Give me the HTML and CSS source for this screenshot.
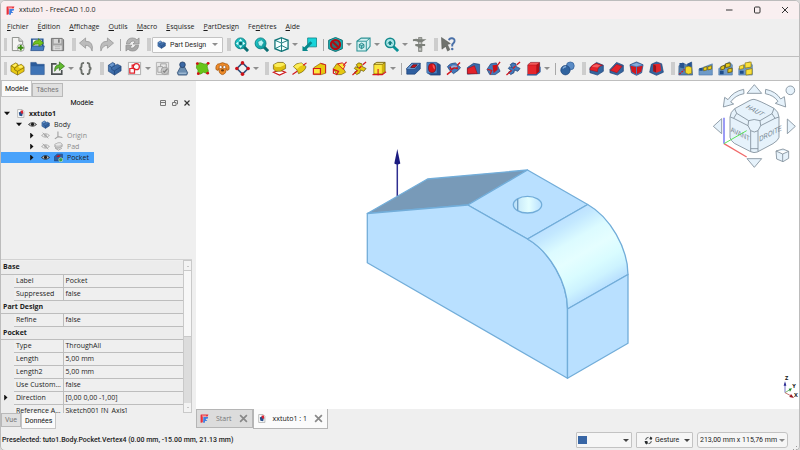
FILE: index.html
```html
<!DOCTYPE html>
<html lang="fr">
<head>
<meta charset="utf-8">
<title>xxtuto1 - FreeCAD 1.0.0</title>
<link rel="stylesheet" href="styles.css">
</head>
<body>
<svg class="sprite" aria-hidden="true">
  <defs>
    <linearGradient id="blueBox" x1="0" y1="0" x2="1" y2="1"><stop offset="0" stop-color="#5b8dc8"/><stop offset="1" stop-color="#24508c"/></linearGradient>
    <linearGradient id="tealLens" x1="0" y1="0" x2="1" y2="1"><stop offset="0" stop-color="#1fd3d6"/><stop offset="1" stop-color="#0b9194"/></linearGradient>
  </defs>
  <symbol id="logo" viewBox="0 0 16 16"><path d="M1 1.500Q1 1 2 1H15L13.500 4.500H5V14.500L2 15.500Q1 15.500 1 14.500Z" fill="#e8303c"/><path d="M3.500 3.500H11" stroke="#fff" stroke-width="1"/><path d="M6 5.500H14.500L13.500 8.500H10.500V10.500H13L11.500 12.500H9L8.500 15.500H5.500Z" fill="#3f7fe0"/></symbol>
  <symbol id="doc" viewBox="0 0 16 16"><path d="M3 1H11L14 4V15H3Z" fill="#fff" stroke="#8d8f8c"/><path d="M5 6L9 4L12 8L11 13L6 12Z" fill="#264f8c"/><path d="M8 3L12 2L13 8L9 8Z" fill="#d92030"/></symbol>
  <symbol id="new" viewBox="0 0 16 16"><path d="M2.500.500H9.500L13.500 4.500V14.500H2.500Z" fill="#f4f4f2" stroke="#8a8c88"/><path d="M9.500.500V4.500H13.500" fill="#d8d8d6" stroke="#8a8c88"/><circle cx="11.500" cy="11.500" r="3.800" fill="#f6f6f4" stroke="#7d807a" stroke-width=".7"/><path d="M11.500 8.500V14.500M8.500 11.500H14.500" stroke="#3d8a12" stroke-width="2"/></symbol>
  <symbol id="open" viewBox="0 0 16 16"><path d="M1 1.500H14.500V13H1Z" fill="#2b5a98"/><path d="M3 3H12.500V10H3Z" fill="#eeeeec"/><path d="M.800 14.500L2 9.500H15.200L14.200 14.500Z" fill="#4a80c2" stroke="#204a87" stroke-width=".8"/><path d="M3 9Q4 3 9 4V1.800L14.500 6.500L9.500 10V7.500Q5 7 3 9Z" fill="#73c51d" stroke="#3e7d06" stroke-width=".7"/></symbol>
  <symbol id="save" viewBox="0 0 16 16"><path d="M1.500 1.500H13L14.500 3V14.500H1.500Z" fill="#a3a3a3" stroke="#707070"/><path d="M4 2H12V7H4Z" fill="#d6d6d6"/><path d="M9.500 2.500V6" stroke="#666" stroke-width="1.500"/><path d="M3.500 9H12.500V14H3.500Z" fill="#e4e4e4"/><path d="M5 10.500H11M5 12.500H11" stroke="#aaa"/></symbol>
  <symbol id="undo" viewBox="0 0 16 16"><path d="M.500 6.500L7 1V4.500Q16 4.500 14 15Q12 9 7 8.800V12Z" fill="#bcbcbc" stroke="#8d8d8d" stroke-width=".7"/></symbol>
  <symbol id="redo" viewBox="0 0 16 16"><path d="M15.500 6.500L9 1V4.500Q0 4.500 2 15Q4 9 9 8.800V12Z" fill="#bcbcbc" stroke="#8d8d8d" stroke-width=".7"/></symbol>
  <symbol id="refresh" viewBox="0 0 16 16"><path d="M1.500 7.500Q2 1 8 1Q11 1 12.700 3L15 1V7.500H8.500L10.800 5.300Q7 2.500 4.800 7.500Z" fill="#b5b5b5" stroke="#868686" stroke-width=".7"/><path d="M14.500 8.800Q14 15 8 15Q5 15 3.300 13L1 15V8.800H7.500L5.200 11Q9 13.500 11.200 8.800Z" fill="#a8a8a8" stroke="#868686" stroke-width=".7"/></symbol>
  <symbol id="fit" viewBox="0 0 16 16"><path d="M10 10L15 15" stroke="#0a6e72" stroke-width="3.200"/><circle cx="7" cy="6.800" r="5.800" fill="url(#tealLens)" stroke="#0b7f82" stroke-width="1"/><path d="M7 1.800L9 4.500H5ZM7 11.800L5 9.100H9ZM2 6.800L4.700 4.800V8.800ZM12 6.800L9.300 8.800V4.800Z" fill="#d9ffff"/><path d="M5.600 5.400H8.400V8.200H5.600Z" fill="#0b6568"/></symbol>
  <symbol id="fitsel" viewBox="0 0 16 16"><path d="M10 10L15 15" stroke="#0a6e72" stroke-width="3.200"/><circle cx="7" cy="6.800" r="5.800" fill="url(#tealLens)" stroke="#0b7f82" stroke-width="1"/><path d="M4 5L8 3L10.500 6L8 10L5 9Z" fill="#b8f4f4" stroke="#0b7f82" stroke-width=".6"/></symbol>
  <symbol id="zoom" viewBox="0 0 16 16"><path d="M9.500 9.500L15 15" stroke="#0a9296" stroke-width="3"/><circle cx="6.500" cy="6.300" r="5" fill="#a8e6e7" stroke="#13898c" stroke-width="1.600"/><path d="M3.500 7L6.500 4L9.500 7H7.500V8.500H5.500V7Z" fill="#0e7a7d"/></symbol>
  <symbol id="iso" viewBox="0 0 16 16"><path d="M8 .800L15 3.500V12.500L8 15.300L1 12.500V3.500Z" fill="#f4ffff" stroke="#127679" stroke-width="1.400"/><path d="M1 3.500L8 6.500L15 3.500M8 6.500V15M8 1V6M1 12.500L8 9L15 12.500" stroke="#127679" fill="none"/></symbol>
  <symbol id="goto" viewBox="0 0 16 16"><path d="M6 1H15.500V10.500H6Z" fill="#18d4da" stroke="#0a7d80" stroke-width=".8"/><path d="M.500 15V9.500L2.500 11L9 4.500L11 6.500L5 13L6.500 15Z" fill="#08888c"/></symbol>
  <symbol id="noclip" viewBox="0 0 16 16"><path d="M8 .500L15.300 3.500V12.500L8 15.500L.700 12.500V3.500Z" fill="#16b7bb" stroke="#0b6a6d"/><circle cx="8" cy="8" r="4.900" fill="#2f7072" stroke="#b10c12" stroke-width="2.200"/><path d="M4.700 4.700L11.300 11.300" stroke="#b10c12" stroke-width="2.200"/></symbol>
  <symbol id="clip" viewBox="0 0 16 16"><path d="M1 4.500L5.500 1.200H15V10L11 15H1Z" fill="#d2f0f0" stroke="#2b9194" stroke-width="1.100"/><path d="M1 4.500H11V15M11 4.500L15 1.200" stroke="#2b9194" fill="none"/><path d="M3.500 8L6 6.500L8.500 8V11L6 12.500L3.500 11ZM3.500 8L6 9.200L8.500 8M6 9.200V12.500" fill="#86dada" stroke="#127376" stroke-width=".8"/></symbol>
  <symbol id="caliper" viewBox="0 0 16 16"><path d="M7 .500H10.500V15.500H7Z" fill="#a9aca8" stroke="#6f736d" stroke-width=".7"/><path d="M1 2.500Q5 1 7 2.500H15.500L10.500 5.500H7Q4 4 1 4.500ZM3.500 7.500H14V9.500H10.500V11.500H7Q6.500 9.500 3.500 9.500Z" fill="#7c807a"/><path d="M7.500 13H9.500M7.500 6.500H9.500" stroke="#eee" stroke-width=".7"/></symbol>
  <symbol id="whats" viewBox="0 0 16 16"><path d="M.500 .500L10 7L6.800 8L9.500 13.500L7 15L5 10L1 13Z" fill="#70736e" stroke="#4b4e49" stroke-width=".5"/><path d="M8.500 3.500Q9 1 11.800 1.300Q15 1.800 14.300 5Q13.500 6.500 12 8V10" fill="none" stroke="#4a70a8" stroke-width="2"/><circle cx="12" cy="12.800" r="1.300" fill="#4a70a8"/></symbol>
  <symbol id="part" viewBox="0 0 16 16"><path d="M1 5L6 2L8.500 3.500V5L12 3.500L15 6V11L8 15L1 11Z" fill="#e9c912" stroke="#7a650a" stroke-width=".7"/><path d="M1 5L5 7.500V9.500L8 11V15M5 7.500L8.500 5M8 11L15 7" fill="none" stroke="#7a650a" stroke-width=".8"/><path d="M2.500 5L6 3L7.500 4L5 6.300Z" fill="#fff06b"/><ellipse cx="11.300" cy="6" rx="2.300" ry="1.300" fill="#fff06b"/></symbol>
  <symbol id="group" viewBox="0 0 16 16"><path d="M.800 1.500H6.500L7.500 3.500H15.200V14.500H.800Z" fill="#2b5c9c" stroke="#2a548c" stroke-width=".6"/><path d="M1.200 5.500H14.800V14.200H1.200Z" fill="#3f74b6"/></symbol>
  <symbol id="link" viewBox="0 0 16 16"><path d="M12.500 9.500V14H2V3H7" fill="none" stroke="#4d5253" stroke-width="1.800"/><path d="M5 11Q4.500 4 10 4V1L15.500 5.500L10 10V7Q7 7 5 11Z" fill="#62bb30" stroke="#24630a" stroke-width=".7"/></symbol>
  <symbol id="varset" viewBox="0 0 16 16"><path d="M6.500 2Q3.500 2 3.800 4.500Q4 7.500 1.800 8Q4 8.500 3.800 11.500Q3.500 14 6.500 14M9.500 2Q12.500 2 12.200 4.500Q12 7.500 14.200 8Q12 8.500 12.200 11.500Q12.500 14 9.500 14" fill="none" stroke="#6c706b" stroke-width="2"/></symbol>
  <symbol id="body" viewBox="0 0 16 16"><path d="M1.500 4.500L6 1.500L8.500 3V5L11 3.500L15 5.500V10.500L8 15L1.500 11Z" fill="url(#blueBox)" stroke="#1d4176" stroke-width=".7"/><path d="M1.500 4.500L5 7V9L8 10.500V15M5 7L8.500 5M8 10.500L15 6" fill="none" stroke="#1d4176" stroke-width=".7"/><path d="M2.500 4.500L6 2.300L7.600 3.500L4.800 5.800Z" fill="#6f9bd0"/></symbol>
  <symbol id="sketch" viewBox="0 0 16 16"><path d="M1.500 1.500H14.500V14.500H1.500Z" fill="#f9f9f9" stroke="#9a9a9a" stroke-width=".8"/><path d="M3 13V8H8V13ZM5.500 8V4.500H8" fill="none" stroke="#e2202a" stroke-width="1.300"/><circle cx="10" cy="6" r="3.200" fill="none" stroke="#e2202a" stroke-width="1.300"/></symbol>
  <symbol id="valid" viewBox="0 0 16 16"><path d="M1.500 1.500H14.500V14.500H1.500Z" fill="#e7e7e7" stroke="#b3b3b3"/><path d="M3 12V6H8V12ZM6 6V3H12V8" fill="none" stroke="#a0a0a0"/><circle cx="10.500" cy="10.500" r="4" fill="#c6c6c6" stroke="#a0a0a0"/><path d="M8.500 10.500L10 12L13 8.500" fill="none" stroke="#888" stroke-width="1.400"/></symbol>
  <symbol id="checkgeo" viewBox="0 0 16 16"><path d="M6 6H10L13.500 12.500L12.500 15H3.500L2.500 12.500Z" fill="#6b8db0" stroke="#2b4a72" stroke-width=".8"/><circle cx="8" cy="4" r="3" fill="#3b68a4" stroke="#1e3a60" stroke-width=".8"/><path d="M4 13H12" stroke="#b9cfe5"/></symbol>
  <symbol id="binder" viewBox="0 0 16 16"><path d="M2 2.500Q6 1 9 3Q11 4 14.500 2Q12 6 13.500 8Q15 10.500 13.500 13.500L9 12Q6 15 3 13.500Q4 9 1.500 7.500Z" fill="#67c51a" stroke="#4a9010" stroke-width=".7"/><circle cx="2.500" cy="2.700" r="1.500" fill="#d41017"/><circle cx="14" cy="2.500" r="1.500" fill="#d41017"/><circle cx="13.500" cy="13" r="1.500" fill="#d41017"/><circle cx="3.500" cy="13.500" r="1.500" fill="#d41017"/></symbol>
  <symbol id="clone" viewBox="0 0 16 16"><path d="M1 9Q.500 3 4.500 3Q8 .500 11.500 3Q15.500 3 15 9L13 10L12 8Q12 14 8 14.500Q4 14 4 8L3 10Z" fill="#ee8a28" stroke="#a3560f" stroke-width=".8"/><circle cx="6" cy="6.500" r="1.600" fill="#fff" stroke="#643006" stroke-width=".5"/><circle cx="10" cy="6.500" r="1.600" fill="#fff" stroke="#643006" stroke-width=".5"/><ellipse cx="8" cy="10" rx="1.700" ry="1.200" fill="#6a3a0e"/></symbol>
  <symbol id="datum" viewBox="0 0 16 16"><path d="M8 2L14 8L8 14L2 8Z" fill="none" stroke="#2c4c77" stroke-width="1.600"/><g fill="#cc1118"><circle cx="8" cy="2" r="1.900"/><circle cx="14" cy="8" r="1.900"/><circle cx="8" cy="14" r="1.900"/><circle cx="2" cy="8" r="1.900"/></g></symbol>
  <symbol id="pad" viewBox="0 0 16 16"><path d="M1.500 12L8 9.500L14.500 12L8 15Z" fill="#fff" stroke="#cf1a20" stroke-width="1.300"/><path d="M1.500 4L6 1.500H12L14.500 4V8L9 11H4L1.500 8.500Z" fill="#dcbd0e" stroke="#6b590a" stroke-width=".7"/><path d="M2 4L6 2H12L14 4L9 6.500H4Z" fill="#fbec58"/></symbol>
  <symbol id="rev" viewBox="0 0 16 16"><path d="M1.500 6Q4 2 10 2L15 6Q14 11 7 13.500Q6 9 1.500 6Z" fill="#e6c810" stroke="#6b590a" stroke-width=".7"/><path d="M2 6Q5 2.500 10 2.300L12.500 4.300Q8 5 5.500 8.500Z" fill="#fbec58"/><path d="M.500 14.500L5.500 11M12 4.500L15.500 2" stroke="#d41920" stroke-width="1.300"/></symbol>
  <symbol id="loft" viewBox="0 0 16 16"><path d="M2 7L9 2.500L14.500 4V13L10 14.500H2Z" fill="#e6c810" stroke="#8c5c0a" stroke-width=".7"/><path d="M1.500 8H9V14H1.500Z" fill="#fbe73e" stroke="#d41920" stroke-width="1.300"/><path d="M9 2.500L14.500 4V13" fill="none" stroke="#d41920"/></symbol>
  <symbol id="sweep" viewBox="0 0 16 16"><path d="M1.500 8L5 3L9 3L14.500 12L10 14.500H5Z" fill="#e6c810" stroke="#6b590a" stroke-width=".7"/><path d="M6 3L11 2L14 4.500L12 9Z" fill="#fbe73e" stroke="#d41920"/><path d="M1.500 9L7 11L5 14.500L1.500 13ZM12 5L15.500 1" fill="none" stroke="#d41920" stroke-width="1.300"/></symbol>
  <symbol id="helix" viewBox="0 0 16 16"><path d="M4.500 4Q7 .500 10.500 3L11 6L15 8L12.500 11L9 9.500L8.500 12.500L5 14.500L2.500 12L5.500 10L2.500 8L4 6L7 7.500Z" fill="#e6c810" stroke="#6b590a" stroke-width=".8"/><path d="M.500 15L6 10M7.500 8L10 5.500M11.500 4L15 1" stroke="#d41920" stroke-width="1.400"/></symbol>
  <symbol id="prim" viewBox="0 0 16 16"><path d="M2 3.500L5 1.500H14V11L11 14H2Z" fill="#d3b40d" stroke="#6b590a" stroke-width=".7"/><path d="M2.500 4H10.500V13H2.500Z" fill="#fbe73e"/><path d="M2 3.500L5 1.500H14L11 3.500Z" fill="#fdf28a" stroke="#6b590a" stroke-width=".7"/><path d="M.500 14.500H11L15 11.500M6.500 8.500V15.500" fill="none" stroke="#d41920" stroke-width="1.200"/></symbol>
  <symbol id="pocket" viewBox="0 0 16 16"><path d="M.800 8L6 2.500H15.200V8.500L9.500 14H.800Z" fill="#2e5e9f" stroke="#1b3f74" stroke-width=".7"/><path d="M.800 8L6 2.500H15.200L9.500 9H.800Z" fill="#6b99d0" stroke="#1b3f74" stroke-width=".6"/><path d="M5 7L7.500 4H12L9.500 7Z" fill="#cc1118" stroke="#4a0a14" stroke-width=".7"/></symbol>
  <symbol id="hole" viewBox="0 0 16 16"><path d="M1 1.500H11L15.200 4V15H5L1 12.500Z" fill="#26528f" stroke="#1b3f74" stroke-width=".7"/><path d="M1 1.500H11.500V13H1Z" fill="#4a7fc0"/><ellipse cx="6.500" cy="7.500" rx="3.900" ry="4.800" fill="#d3141b" stroke="#5c0a14" stroke-width=".6"/><path d="M7 3.500Q10 5 9.500 9Q7 8 7 3.500Z" fill="#f7575a"/></symbol>
  <symbol id="groove" viewBox="0 0 16 16"><path d="M1.500 6Q4 2 10 2L15.500 7L13 10L8 13.500L4 10Z" fill="#4379ba" stroke="#1b3f74" stroke-width=".7"/><path d="M3.500 7Q7 3.500 12 5.500L13 9L9 8L5.500 10Z" fill="#cc1118"/><path d="M5 6Q8 3.500 12 5.500L11 7Q8 6 6 8Z" fill="#8fb3de"/><path d="M1 14.500L6 10.500M12 4.500L15 1.500" stroke="#d41920" stroke-width="1.500"/></symbol>
  <symbol id="subloft" viewBox="0 0 16 16"><path d="M1.500 7L8 2.500L14.500 3.500V13.500H10L1.500 14Z" fill="#3a6cad" stroke="#1b3f74" stroke-width=".7"/><path d="M1.500 8L9 5L12 13.500H1.500Z" fill="#e3222a" stroke="#9c0a14" stroke-width=".6"/></symbol>
  <symbol id="subsweep" viewBox="0 0 16 16"><path d="M1 9L5 3L11 2L15 11L10 14.500H4Z" fill="#4379ba" stroke="#1b3f74" stroke-width=".7"/><path d="M7 4.500L12 4L12.500 9L8 13Z" fill="#cc1118"/><path d="M1.500 9L6 10L4.500 14M12 5L15 1" fill="none" stroke="#cf1a20" stroke-width="1.400"/></symbol>
  <symbol id="subhelix" viewBox="0 0 16 16"><path d="M4.500 4Q7 .500 10.500 3L11 6L15 8L12.500 11L9 9.500L8.500 12.500L5 14.500L2.500 12L5.500 10L2.500 8L4 6L7 7.500Z" fill="#4379ba" stroke="#1b3f74" stroke-width=".8"/><path d="M.500 15L6 10M7.500 8L10 5.500M11.500 4L15 1" stroke="#d41920" stroke-width="1.400"/></symbol>
  <symbol id="subprim" viewBox="0 0 16 16"><path d="M2 4L5 1.500H14.500V11L11 14.500H2Z" fill="#b30f16" stroke="#4a1832" stroke-width=".7"/><path d="M2 4.500H11V14H2Z" fill="#e5252b"/><path d="M2 4L5 1.500H14.500L11 4Z" fill="#f25a5a"/><path d="M1 14.800H11L15 11.500V6" fill="none" stroke="#2e5e9f" stroke-width="1.200"/></symbol>
  <symbol id="bool" viewBox="0 0 16 16"><circle cx="11" cy="5.200" r="4.200" fill="#5b8cc6" stroke="#2d5a94" stroke-width=".7"/><circle cx="5.800" cy="9.800" r="5" fill="#30639f" stroke="#1d4379" stroke-width=".7"/><path d="M3 8Q4 6 6.500 6" stroke="#8bb2de" fill="none" stroke-width="1.300"/></symbol>
  <symbol id="fillet" viewBox="0 0 16 16"><path d="M1 7L8 1.500L15.300 4.500V11L9 15L1 12.500Z" fill="#34659f" stroke="#1b3f74" stroke-width=".7"/><path d="M1 8.500Q2.500 4 7.500 2.500L14.500 4.500Q9 6 9 11.500L1 9.500Z" fill="#e3222a" stroke="#9c0a14" stroke-width=".5"/><path d="M3 6Q5 3.700 8 3.500L12.500 4.700Q10 5.500 9 7Z" fill="#f35b5e"/></symbol>
  <symbol id="chamfer" viewBox="0 0 16 16"><path d="M1 9L8 1.500L15.300 4.500V11L9 15L1 12.500Z" fill="#34659f" stroke="#1b3f74" stroke-width=".7"/><path d="M1.500 10L8 3.500L14 5.500L8.500 12.500Z" fill="#e3222a" stroke="#9c0a14" stroke-width=".5"/></symbol>
  <symbol id="draft" viewBox="0 0 16 16"><path d="M1 4L8 1L15 4L13.500 12.500L8 15.300L2.500 12.500Z" fill="#4a7fbe" stroke="#1b3f74" stroke-width=".7"/><path d="M1.500 5L7.500 6.500V14L3 11.500ZM8.500 6.500L14.500 5L13 11.500L8.500 14Z" fill="#d2171e"/><path d="M2.500 4L8 2L13.500 4L8 5.500Z" fill="#86abd8"/></symbol>
  <symbol id="thick" viewBox="0 0 16 16"><path d="M2.500 3.500L8 1L13.500 3L15.300 12L8 15.300L.700 12Z" fill="#34659f" stroke="#1b3f74" stroke-width=".7"/><path d="M4.500 3.500L12 3L13 10.500L8 12.500L4.500 11Z" fill="#e0252b"/><path d="M4.500 3.500L7.500 5V12L4.500 11Z" fill="#98121a"/></symbol>
  <symbol id="mirror" viewBox="0 0 16 16"><path d="M1 5L5 2L9 4L14.500 1L15.500 15H.800Z" fill="#5582b0" stroke="#2b4f7c" stroke-width=".6"/><path d="M1.500 2L6.500 2V8L2 7ZM10 3L14.500 1V6H10Z" fill="#28548f"/><path d="M8 6.500L11.500 5.500L14.500 7V13L11 14L8 12.500Z" fill="#f5da2a" stroke="#8a720a" stroke-width=".6"/><path d="M1.500 14L7 9" stroke="#d41920" stroke-width="1.400" stroke-dasharray="2 1"/></symbol>
  <symbol id="linear" viewBox="0 0 16 16"><path d="M1 8.500L15.300 3V15H1Z" fill="#6f9ac8" stroke="#4674a8" stroke-width=".6"/><path d="M1.500 7.500H5V10.500H1.500Z" fill="#1f4d88"/><path d="M6 7L9.500 6V9.500L6 10.500ZM10.500 6L14.500 5V8.500L10.500 9.500Z" fill="#efd21b" stroke="#6d5905" stroke-width=".7"/></symbol>
  <symbol id="polar" viewBox="0 0 16 16"><path d="M.800 8L12 1L15.300 4V15H.800Z" fill="#6f9ac8" stroke="#4674a8" stroke-width=".6"/><path d="M2 10.500H6V14H2Z" fill="#1f4d88"/><path d="M3 6L7 4.500V8.500L3 9.500ZM8 3L13 2V6L8 7ZM10.500 8.500L15 7.500V11.500L10.500 12.500Z" fill="#e5c91b" stroke="#5d4c05" stroke-width=".8"/></symbol>
  <symbol id="multi" viewBox="0 0 16 16"><path d="M.800 8L12 1L15.300 4V15H.800Z" fill="#6f9ac8" stroke="#4674a8" stroke-width=".6"/><path d="M2 10.500H6V13.500H2Z" fill="#1f4d88"/><path d="M1.500 5.500L6 4V8L1.500 9ZM7.500 2L14 1V6.500L7.500 7.500ZM8.500 9.500L15 8V14L8.500 15Z" fill="#f9e03a" stroke="#8d750a" stroke-width=".7"/></symbol>
  <symbol id="eye" viewBox="0 0 16 16"><path d="M1 8Q8 1.500 15 8Q8 14 1 8Z" fill="#fff" stroke="currentColor" stroke-width="1.600"/><circle cx="8" cy="7.700" r="3" fill="currentColor"/></symbol>
  <symbol id="eyeoff" viewBox="0 0 16 16"><path d="M1 8Q8 1.500 15 8Q8 14 1 8Z" fill="none" stroke="#a6a6a6" stroke-width="1.500"/><circle cx="8" cy="8" r="2.500" fill="#b5b5b5"/><path d="M3 3L13 13" stroke="#a0a0a0" stroke-width="1.500"/></symbol>
  <symbol id="origin" viewBox="0 0 16 16"><path d="M7 1V10L1.500 14M7 10L15 11.500" fill="none" stroke="#a2a2a2" stroke-width="2"/></symbol>
  <symbol id="padoff" viewBox="0 0 16 16"><path d="M1.500 4L7 1.500H12L14.500 4V8L9 11H4L1.500 8.500Z" fill="#c7c7c7" stroke="#8b8b8b"/><path d="M2 11L8 14.500L14 11" fill="none" stroke="#9b9b9b" stroke-width="1.500"/><path d="M2 4L7 2H12L14 4L9 6H4Z" fill="#e8e8e8"/></symbol>
  <symbol id="tip" viewBox="0 0 16 16"><path d="M.500 6.500L5.500 2H15V9L9.500 14H.500Z" fill="#2e5e9f" stroke="#1b3f74"/><path d="M4 7L7 4H12L9 7Z" fill="#cc1118"/><circle cx="12" cy="12" r="3.600" fill="#3f9e45" stroke="#d7f1d7"/></symbol>
  <symbol id="gesture" viewBox="0 0 16 16"><path d="M3 7Q3 2.500 8 2.500M13 9Q13 13.500 8 13.500" stroke="#2a2e30" fill="none" stroke-width="1.500"/><path d="M11.500 1L15 3.500L13 7L9.500 5.500ZM1 9L6 9L7 13L4.500 15L2 13Z" fill="#2a2e30"/></symbol>
  <symbol id="close" viewBox="0 0 16 16"><path d="M2 2L14 14M14 2L2 14" stroke="currentColor" stroke-width="3" fill="none"/></symbol>
</svg>

<div class="window">
  <header class="titlebar">
    <svg class="ic9"><use href="#logo"/></svg>
    <h1>xxtuto1 - FreeCAD 1.0.0</h1>
    <div class="winbtns">
      <button aria-label="Réduire"><svg viewBox="0 0 8 8"><path d="M1 4H7.500" stroke="#333" fill="none"/></svg></button>
      <button aria-label="Agrandir"><svg viewBox="0 0 8 8"><rect x="1.500" y="1" width="5.500" height="6" rx="1" stroke="#333" fill="none"/></svg></button>
      <button aria-label="Fermer"><svg viewBox="0 0 8 8"><path d="M1 1L7 7M7 1L1 7" stroke="#333" fill="none"/></svg></button>
    </div>
  </header>

  <nav class="menubar">
    <button><u>F</u>ichier</button><button><u>É</u>dition</button><button><u>A</u>ffichage</button><button><u>O</u>utils</button><button><u>M</u>acro</button><button><u>E</u>squisse</button><button><u>P</u>artDesign</button><button>Fe<u>n</u>êtres</button><button><u>A</u>ide</button>
  </nav>

  <div class="toolbar">
    <i class="handle"></i>
    <button aria-label="Nouveau"><svg><use href="#new"/></svg></button>
    <button aria-label="Ouvrir"><svg><use href="#open"/></svg></button>
    <button aria-label="Enregistrer"><svg><use href="#save"/></svg></button>
    <i class="handle"></i>
    <button aria-label="Annuler"><svg><use href="#undo"/></svg></button>
    <button aria-label="Rétablir"><svg><use href="#redo"/></svg></button>
    <i class="sep"></i>
    <button aria-label="Rafraîchir"><svg><use href="#refresh"/></svg></button>
    <i class="handle"></i>
    <div class="combo workbench"><svg class="ic9"><use href="#body"/></svg><select aria-label="Atelier"><option>Part Design</option></select></div>
    <i class="handle"></i>
    <button aria-label="Tout afficher"><svg><use href="#fit"/></svg></button>
    <button aria-label="Afficher la sélection"><svg><use href="#fitsel"/></svg></button>
    <button class="drop" aria-label="Vue isométrique"><svg><use href="#iso"/></svg></button>
    <button aria-label="Aller à la sélection"><svg><use href="#goto"/></svg></button>
    <i class="sep"></i>
    <button class="drop" aria-label="Style de tracé"><svg><use href="#noclip"/></svg></button>
    <button class="drop" aria-label="Boîte de sélection"><svg><use href="#clip"/></svg></button>
    <button class="drop" aria-label="Zoom"><svg><use href="#zoom"/></svg></button>
    <button aria-label="Mesurer"><svg><use href="#caliper"/></svg></button>
    <i class="handle"></i>
    <button aria-label="Qu’est-ce que c’est"><svg><use href="#whats"/></svg></button>
  </div>

  <div class="toolbar">
    <i class="handle"></i>
    <button aria-label="Pièce"><svg><use href="#part"/></svg></button>
    <button aria-label="Groupe"><svg><use href="#group"/></svg></button>
    <button class="drop" aria-label="Lien"><svg><use href="#link"/></svg></button>
    <button aria-label="Variables"><svg><use href="#varset"/></svg></button>
    <i class="handle"></i>
    <button aria-label="Corps"><svg><use href="#body"/></svg></button>
    <button class="drop" aria-label="Esquisse"><svg><use href="#sketch"/></svg></button>
    <button aria-label="Valider l’esquisse"><svg><use href="#valid"/></svg></button>
    <button aria-label="Vérifier la géométrie"><svg><use href="#checkgeo"/></svg></button>
    <button aria-label="Forme liée"><svg><use href="#binder"/></svg></button>
    <button aria-label="Cloner"><svg><use href="#clone"/></svg></button>
    <button class="drop" aria-label="Référence"><svg><use href="#datum"/></svg></button>
    <i class="handle"></i>
    <button aria-label="Protrusion"><svg><use href="#pad"/></svg></button>
    <button aria-label="Révolution"><svg><use href="#rev"/></svg></button>
    <button aria-label="Lissage additif"><svg><use href="#loft"/></svg></button>
    <button aria-label="Balayage additif"><svg><use href="#sweep"/></svg></button>
    <button aria-label="Hélice additive"><svg><use href="#helix"/></svg></button>
    <button class="drop" aria-label="Primitive additive"><svg><use href="#prim"/></svg></button>
    <i class="sep"></i>
    <button aria-label="Cavité"><svg><use href="#pocket"/></svg></button>
    <button aria-label="Perçage"><svg><use href="#hole"/></svg></button>
    <button aria-label="Rainure"><svg><use href="#groove"/></svg></button>
    <button aria-label="Lissage soustractif"><svg><use href="#subloft"/></svg></button>
    <button aria-label="Balayage soustractif"><svg><use href="#subsweep"/></svg></button>
    <button aria-label="Hélice soustractive"><svg><use href="#subhelix"/></svg></button>
    <button class="drop" aria-label="Primitive soustractive"><svg><use href="#subprim"/></svg></button>
    <i class="sep"></i>
    <button aria-label="Opération booléenne"><svg><use href="#bool"/></svg></button>
    <i class="handle"></i>
    <button aria-label="Congé"><svg><use href="#fillet"/></svg></button>
    <button aria-label="Chanfrein"><svg><use href="#chamfer"/></svg></button>
    <button aria-label="Dépouille"><svg><use href="#draft"/></svg></button>
    <button aria-label="Évidement"><svg><use href="#thick"/></svg></button>
    <i class="handle"></i>
    <button aria-label="Symétrie"><svg><use href="#mirror"/></svg></button>
    <button aria-label="Répétition linéaire"><svg><use href="#linear"/></svg></button>
    <button aria-label="Répétition circulaire"><svg><use href="#polar"/></svg></button>
    <button aria-label="Transformation multiple"><svg><use href="#multi"/></svg></button>
  </div>

  <main class="work">
    <aside class="side">
      <div class="tabs top"><button class="on">Modèle</button><button>Tâches</button></div>
      <div class="dockhead">
        <h2>Modèle</h2>
        <button aria-label="Réduire le panneau"><svg viewBox="0 0 8 8"><path d="M1.500 1.500H6.500V6.500H1.500ZM1.500 3.500H6.500" fill="none" stroke="#777"/></svg></button>
        <button aria-label="Détacher le panneau"><svg viewBox="0 0 8 8"><path d="M1.500 3.500H5V6.500H1.500ZM3.500 3V1.500H6.500V5H5.500" fill="none" stroke="#777"/></svg></button>
        <button aria-label="Fermer le panneau"><svg viewBox="0 0 8 8"><path d="M1.500 1.500L6.500 6.500M6.500 1.500L1.500 6.500" fill="none" stroke="#333" stroke-width="1.200"/></svg></button>
      </div>
      <ul class="tree">
        <li class="l0"><i class="tw open"></i><svg class="ic9"><use href="#doc"/></svg><b>xxtuto1</b></li>
        <li class="l1"><i class="tw open"></i><svg class="ic9"><use href="#eye"/></svg><svg class="ic9"><use href="#body"/></svg><span>Body</span></li>
        <li class="l2 off"><i class="tw"></i><svg class="ic9"><use href="#eyeoff"/></svg><svg class="ic9"><use href="#origin"/></svg><span>Origin</span></li>
        <li class="l2 off"><i class="tw"></i><svg class="ic9"><use href="#eyeoff"/></svg><svg class="ic9"><use href="#padoff"/></svg><span>Pad</span></li>
        <li class="l2 sel"><i class="tw"></i><svg class="ic9"><use href="#eye"/></svg><svg class="ic9"><use href="#tip"/></svg><span>Pocket</span></li>
      </ul>
      <div class="props">
        <div class="propview">
          <table>
            <colgroup><col class="c-g"><col class="c-name"><col></colgroup>
            <tbody>
              <tr class="grp"><th colspan="3">Base</th></tr>
              <tr><td class="g"></td><td>Label</td><td>Pocket</td></tr>
              <tr><td class="g"></td><td>Suppressed</td><td>false</td></tr>
              <tr class="grp"><th colspan="3">Part Design</th></tr>
              <tr><td class="g"></td><td>Refine</td><td>false</td></tr>
              <tr class="grp"><th colspan="3">Pocket</th></tr>
              <tr><td class="g"></td><td>Type</td><td>ThroughAll</td></tr>
              <tr><td class="g"></td><td>Length</td><td>5,00 mm</td></tr>
              <tr><td class="g"></td><td>Length2</td><td>5,00 mm</td></tr>
              <tr><td class="g"></td><td>Use Custom...</td><td>false</td></tr>
              <tr><td class="g"><i class="tw"></i></td><td>Direction</td><td>[0,00 0,00 -1,00]</td></tr>
              <tr><td class="g"></td><td>Reference A...</td><td>Sketch001 [N_Axis]</td></tr>
            </tbody>
          </table>
        </div>
        <div class="scroll"><button aria-label="Monter"><i class="up"></i></button><div class="thumb"></div><div class="track"></div><button aria-label="Descendre"><i class="down"></i></button></div>
      </div>
      <div class="tabs bottom"><button>Vue</button><button class="on">Données</button></div>
    </aside>

    <section class="center">
      <div class="view">
        <svg class="model" viewBox="196 81 603 328" role="img" aria-label="Modèle 3D">
          <defs>
            <linearGradient id="round" gradientUnits="userSpaceOnUse" x1="527.500" y1="239" x2="568" y2="308.500">
              <stop offset="0" stop-color="#bde1ff"/><stop offset=".1" stop-color="#c3e8ff"/><stop offset=".3" stop-color="#dcfbff"/><stop offset=".5" stop-color="#e5feff"/><stop offset=".7" stop-color="#d9fcff"/><stop offset=".85" stop-color="#cdf3ff"/><stop offset="1" stop-color="#b9e0ff"/>
            </linearGradient>
            <linearGradient id="bore" x1="0" x2="1"><stop offset="0" stop-color="#b7dcf8"/><stop offset=".25" stop-color="#cfeffb"/><stop offset=".55" stop-color="#e3feff"/><stop offset="1" stop-color="#b9e0ff"/></linearGradient>
          </defs>
          <path d="M397.300 196V160" stroke="#2e2e90" stroke-width="1.500"/>
          <path d="M397.300 149L400.300 163.500Q397.300 165.500 394.300 163.500Z" fill="#1b1b80"/>
          <g stroke="#72add9" stroke-width="1.300" stroke-linejoin="round">
            <path d="M367.300 213.500L427.500 179L527.500 170L467.800 205Z" fill="#789ab8"/>
            <path d="M467.800 205L527.500 170L587.700 204.500L527.500 239Z" fill="#b9e0ff"/>
            <path d="M367.300 213.500L467.800 205L527.500 239C550 252 567.500 283 567.500 309V378.300L367.300 262.700Z" fill="#b9e0ff"/>
            <path d="M527.500 239L587.700 204.500C610 217 628 248.500 628 274.500L567.500 309C567.500 283 550 252 527.500 239Z" fill="url(#round)"/>
            <path d="M567.500 309L628 274.500V343.300L567.500 378.300Z" fill="#b9e0ff"/>
            <ellipse cx="527.500" cy="204.700" rx="14.200" ry="8.300" fill="url(#bore)"/>
            <path d="M517.700 199V210.500" fill="none" stroke="#6b9cc4"/>
          </g>
        </svg>

        <svg class="navcube" viewBox="0 9 297 276" role="img" aria-label="Cube de navigation">
          <path d="M72 119V197" stroke="#6a6af0" stroke-width="4"/>
          <path d="M72 197L140 237" stroke="#f06a6a" stroke-width="4"/>
          <g fill="#e6f2fb" stroke="#7e8d99" stroke-width="2.500" stroke-linejoin="round">
            <path d="M163 20L185 46H141ZM163 268L141 242H185ZM40 145L65 122V167ZM286 145L262 123V167Z"/>
            <path d="M131 34Q100 40 84 65L74 58L70 87L101 78L92 72Q105 52 132 47Z"/>
            <path d="M197 34Q228 40 242 63L253 56L257 87L226 76L234 70Q222 52 196 47Z"/>
            <circle cx="271" cy="37" r="13"/>
            <path d="M228 219L249 213L266 220V241L249 251L230 243ZM228 219L248 228L266 220M248 228V250"/>
            <path d="M162 64Q175 66 222 91Q236 101 237 117V178Q235 187 219 197L172 222Q162 226 152 221L103 196Q91 187 90 178V117Q91 102 104 92L150 67Q156 64 162 64Z"/>
            <path d="M104 92L110 106L146 128Q162 121 180 128L216 107L222 91M110 106L101 121M146 128L144 143L152 158L163 162L174 158L182 143L180 128M144 143L101 121L91 117M182 143L225 121L237 117M216 107L225 121M152 158V221M174 158V221M152 212H174" fill="none"/>
          </g>
          <g class="faces">
            <text transform="translate(135 89) rotate(28) skewX(-28)">HAUT</text>
            <text transform="translate(92 161) rotate(27) skewX(27)">AVANT</text>
            <text transform="translate(178 191) rotate(-27) skewX(-27)">DROITE</text>
          </g>
          <path d="M72 197L140 158" stroke="#5be65b" stroke-width="3"/>
        </svg>

        <svg class="axes" viewBox="0 0 45 72" role="img" aria-label="Axes">
          <path d="M9 50V22" stroke="#7878c8" stroke-width="3"/><path d="M9 16L13 29H5Z" fill="#28288f"/>
          <path d="M9 50L22 42" stroke="#74b874" stroke-width="3"/><path d="M30 37L20 38L24 47Z" fill="#1c8a2c"/>
          <path d="M9 50L24 58" stroke="#c87878" stroke-width="3"/><path d="M36 66L22 63L27 54Z" fill="#9c1820"/>
          <text x="9" y="13">Z</text><text x="31" y="35">Y</text><text x="36" y="63">X</text>
        </svg>
      </div>
      <div class="docs">
        <div class="doc"><svg class="ic9"><use href="#logo"/></svg><button>Start</button><button class="x" aria-label="Fermer Start"><svg><use href="#close"/></svg></button></div>
        <div class="doc on"><svg class="ic9"><use href="#doc"/></svg><button>xxtuto1 : 1</button><button class="x" aria-label="Fermer xxtuto1"><svg><use href="#close"/></svg></button></div>
      </div>
    </section>
  </main>

  <footer class="status">
    <p>Preselected: tuto1.Body.Pocket.Vertex4 (0.00 mm, -15.00 mm, 21.13 mm)</p>
    <div class="combo layer"><i class="swatch"></i><select aria-label="Notifications"><option></option></select></div>
    <div class="combo nav"><svg class="ic9"><use href="#gesture"/></svg><select aria-label="Navigation"><option>Gesture</option></select></div>
    <div class="combo dims"><select aria-label="Dimensions"><option>213,00 mm x 115,76 mm</option></select></div>
    <i class="grip"></i>
  </footer>
</div>
</body>
</html>
```
FILE: styles.css
```css
* { box-sizing: border-box; }
html, body { margin: 0; height: 100%; }
body { background: #d8d8d8; color: #1c1c1c; font: 7px/10px "Open Sans", "Noto Sans", sans-serif; }
button, select { font: inherit; color: inherit; background: none; border: 0; padding: 0; margin: 0; }
h1, h2, p, ul { margin: 0; padding: 0; font-size: inherit; font-weight: inherit; }
.sprite { position: absolute; width: 0; height: 0; }
.ic9 { width: 9px; height: 9px; flex: none; }

.window { min-height: 100vh; display: flex; flex-direction: column; background: #efefef; border: 1px solid #bcbcbc; border-radius: 5px; overflow: hidden; }

.titlebar { display: flex; align-items: center; gap: 4px; height: 18px; padding-left: 5px; background: #f9eff0; }
.winbtns { margin-left: auto; display: flex; }
.winbtns button { width: 28px; height: 18px; display: grid; place-items: center; }
.winbtns svg { width: 8px; height: 8px; }

.menubar { display: flex; gap: 9px; height: 14px; padding: 1px 0 0 6px; align-items: center; }
.menubar u { text-underline-offset: 1px; text-decoration-thickness: 1px; }

.toolbar { display: flex; align-items: center; height: 24px; border-bottom: 1px solid #bebebe; }
.toolbar button { flex: none; width: 20px; height: 20px; display: flex; align-items: center; padding-left: 2px; }
.toolbar button svg { width: 15px; height: 15px; flex: none; }
.toolbar .drop { width: 28px; gap: 3px; }
.toolbar .drop::after, .combo::after { content: ""; flex: none; border: 3px solid transparent; border-top-color: #8e8e8e; border-bottom: 0; }
.handle { flex: none; width: 9px; height: 13px; border-left: 4px solid transparent; border-right: 1px solid transparent; background: radial-gradient(circle, #cdcdcd 1px, transparent 1px) 0 0 / 2px 2px; background-clip: padding-box; }
.handle:first-child { width: 7px; border-left-width: 3px; }
.sep { flex: none; width: 1px; height: 12px; margin: 0 2px 0 3px; background: #a8a8a8; }

.combo { display: flex; align-items: center; height: 16px; padding: 0 4px; gap: 4px; background: #f6f6f6; border: 1px solid #c3c3c3; border-radius: 1px; }
.combo select { flex: 1; min-width: 0; appearance: none; outline: 0; }
.workbench { width: 71px; background: #fcfcfc; }

.tabs, .dockhead, .status, .combo { font-family: Roboto, "Open Sans", sans-serif; }

.work { flex: 1; display: flex; min-height: 0; }
.side { flex: none; width: 195px; display: flex; flex-direction: column; }
.tabs { display: flex; align-items: flex-start; }
.tabs button { color: #777; background: #e0e0e0; border: 1px solid #b9b9b9; padding: 0 3px; height: 14px; }
.tabs .on { color: #111; background: #fafafa; border-color: #c6c6c6; height: 16px; }
.top { height: 16px; align-items: flex-end; }
.top .on { border-top: 0; }
.bottom { height: 17px; }
.bottom .on { border-top: 0; }
.dockhead { display: flex; align-items: center; height: 11px; padding-right: 3px; color: #000; }
.dockhead h2 { flex: 1; text-align: center; padding-left: 6px; }
.dockhead button { width: 12px; height: 10px; display: grid; place-items: center; }
.dockhead svg { width: 8px; height: 8px; }

.tree { list-style: none; flex: 1; min-height: 0; overflow: hidden; }
.tree li { display: flex; align-items: center; height: 11px; gap: 4px; width: max-content; padding-right: 5px; }
.tree .l0 { padding-left: 3px; }
.tree .l1 { padding-left: 15px; }
.tree .l2 { padding-left: 28px; }
.tree .tw { margin-right: 2px; }
.tree .off { color: #8b8b8b; }
.tree .sel { background: linear-gradient(#48a2fb, #48a2fb); }
.tw { flex: none; width: 6px; height: 6px; display: block; background: #111; clip-path: polygon(20% 0, 75% 50%, 20% 100%); }
.tw.open { clip-path: polygon(0 20%, 100% 20%, 50% 80%); }

.props { flex: none; display: flex; height: 154px; margin-right: 4px; overflow: hidden; border-top: 1px solid #d2d2d2; }
.propview { flex: 1; overflow: hidden; padding-top: 1px; }
table { width: 100%; border-collapse: collapse; table-layout: fixed; }
.c-g { width: 13px; }
.c-name { width: 49px; }
td, th { height: 13px; padding: 0 2px; text-align: left; font-weight: 400; line-height: 10px; border-bottom: 1px solid #bdbdbd; white-space: nowrap; overflow: hidden; }
th { font-weight: 700; background: #ececec; }
td:nth-child(2) { border-right: 1px solid #bdbdbd; }
td.g { background: #ececec; border-bottom-color: #ececec; }
.scroll { flex: none; width: 9px; display: flex; flex-direction: column; background: #dcdcdc; border: 1px solid #c9c9c9; }
.scroll button { height: 9px; background: #f3f3f3; display: grid; place-items: center; }
.thumb { height: 67px; background: #f7f7f7; border: solid #c9c9c9; border-width: 1px 0; }
.track { flex: 1; }
.up, .down { border: 1px solid transparent; border-bottom-color: #999; }
.down { border-color: #999 transparent transparent; }

.center { flex: 1; min-width: 0; display: flex; flex-direction: column; }
.view { position: relative; flex: 1; min-height: 0; background: #fff; overflow: hidden; }
.model { display: block; width: 100%; height: 100%; }
.navcube { position: absolute; top: 0; right: 0; width: 99px; height: 92px; }
.faces { font: 20px/1 "Liberation Sans", sans-serif; fill: #75838e; }
.axes { position: absolute; right: 2px; bottom: 9px; width: 15px; height: 24px; overflow: visible; }
.axes text { font: 700 17px "Open Sans", sans-serif; fill: #111; }
.docs { display: flex; height: 21px; }
.doc { display: flex; align-items: center; height: 19px; padding: 0 4px 0 3px; gap: 7px; background: #dcdcdc; border: 1px solid #b5b5b5; color: #777; }
.doc.on { height: 20px; background: #fbfbfb; border-top: 0; color: #111; }
.doc .x { width: 9px; height: 9px; color: #888; }
.doc .x svg { width: 9px; height: 9px; display: block; }

.status { display: flex; align-items: center; gap: 4px; height: 20px; padding: 0 0 0 1px; }
.status p { flex: 1; font-weight: 500; }
.status .combo { padding: 0 2px 0 1px; }
.status .combo::after { border-top-color: #444; }
.layer { width: 56px; }
.nav { width: 57px; }
.status .nav { padding-left: 7px; gap: 2px; }
.dims { width: 91px; }
.status .dims { border-radius: 3px; padding-left: 2px; gap: 0; }
.status .dims::after { border-top-color: #888; }
.swatch { width: 9px; height: 8px; background: #3866a5; }
.grip { width: 7px; height: 8px; align-self: flex-end; background: radial-gradient(circle, #9a9a9a 1px, transparent 1px) 0 0 / 3px 3px; clip-path: polygon(100% 0, 100% 100%, 0 100%); }
```
